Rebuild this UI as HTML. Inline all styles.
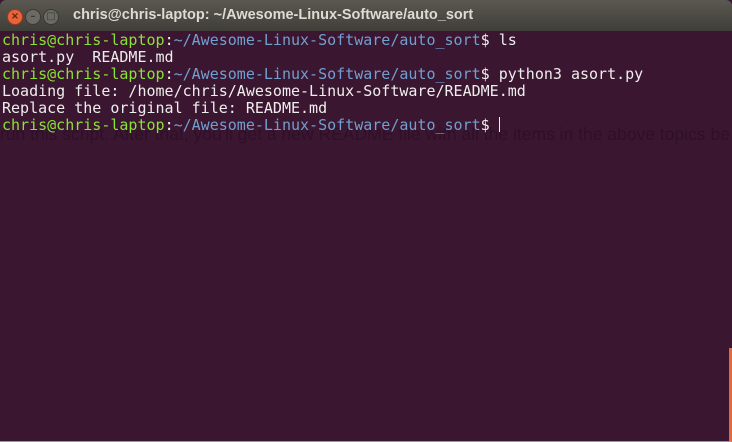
<!DOCTYPE html>
<html><head><style>
html,body{margin:0;padding:0;width:732px;height:442px;overflow:hidden;background:#3b1631;}
.title{position:absolute;left:0;top:0;width:732px;height:31px;background:linear-gradient(#5a5850,#3f3e39);border-radius:6px 6px 0 0;}
.btn{position:absolute;top:9px;width:16px;height:16px;border-radius:50%;background:#6b6a64;border:1px solid #3a3934;box-sizing:border-box;color:#3a3934;font:bold 10px "DejaVu Sans",sans-serif;text-align:center;line-height:14px;}
.ttl{position:absolute;left:73px;top:7px;color:#dfdbd2;font:bold 14.5px "Liberation Sans","DejaVu Sans",sans-serif;}
.term{position:absolute;left:2px;top:32px;font:15px/17px "DejaVu Sans Mono",monospace;color:#eeeeec;white-space:pre;}
.g{color:#8ae234}.b{color:#729fcf}
.ghost{position:absolute;left:0;top:124px;width:732px;overflow:hidden;font:17.5px "Liberation Sans",sans-serif;color:#2f1028;white-space:pre;}
.cur{display:inline-block;width:1px;height:15px;background:#eeeeec;vertical-align:-2px;}
</style></head><body>
<div class="title"></div>
<div class="btn" style="left:7px;background:#e8643a;border-color:#a5391a;color:#5a1e0c">×</div>
<div class="btn" style="left:25px">–</div>
<div class="btn" style="left:43px">□</div>
<div class="ttl">chris@chris-laptop: ~/Awesome-Linux-Software/auto_sort</div>
<div class="ghost">run this script. After that, you'll get a new README file with all the items in the above topics be</div>
<div class="term"><span class="g">chris@chris-laptop</span>:<span class="b">~/Awesome-Linux-Software/auto_sort</span>$ ls
asort.py  README.md
<span class="g">chris@chris-laptop</span>:<span class="b">~/Awesome-Linux-Software/auto_sort</span>$ python3 asort.py
Loading file: /home/chris/Awesome-Linux-Software/README.md
Replace the original file: README.md
<span class="g">chris@chris-laptop</span>:<span class="b">~/Awesome-Linux-Software/auto_sort</span>$ <span class="cur"></span></div>
<div style="position:absolute;left:729px;top:348px;width:3px;height:93px;background:#e06a3a"></div>
<div style="position:absolute;left:0;top:441px;width:732px;height:1px;background:#9a9a9a"></div>
</body></html>
